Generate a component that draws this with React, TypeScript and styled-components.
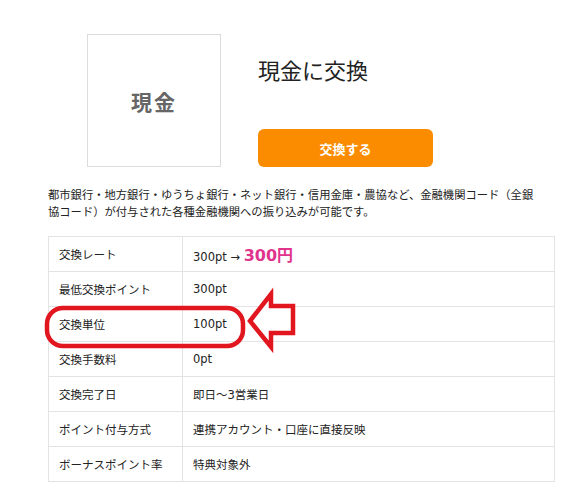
import React from 'react';
import styled, { createGlobalStyle } from 'styled-components';

const GlobalStyle = createGlobalStyle`
  body {
    margin: 0;
    background: #fff;
    color: #333;
    font-family: 'DejaVu Sans', 'Noto Sans CJK JP', sans-serif;
  }
`;

const Page = styled.div`
  position: relative;
  width: 507px;
  padding: 34px 25px 16px 48px;
`;

const Header = styled.div`
  display: flex;
  gap: 37px;
  padding-left: 39px;
`;

const LogoBox = styled.div`
  width: 132px;
  height: 131px;
  border: 1px solid #dcdcdc;
  display: flex;
  align-items: center;
  justify-content: center;
  font-family: 'Noto Sans CJK JP', sans-serif;
  font-size: 21px;
  font-weight: 700;
  letter-spacing: 2px;
  color: #666;
`;

const HeaderMain = styled.div`
  display: flex;
  flex-direction: column;
`;

const Title = styled.h1`
  margin: 22px 0 0;
  font-family: 'Noto Sans CJK JP', sans-serif;
  font-size: 22px;
  font-weight: 400;
  line-height: 26px;
  color: #222;
`;

const ExchangeButton = styled.button`
  margin-top: auto;
  width: 175px;
  height: 38px;
  border: none;
  border-radius: 6px;
  background: #fb8c00;
  color: #fff;
  font-family: 'Noto Sans CJK JP', sans-serif;
  font-size: 13px;
  font-weight: 700;
  cursor: pointer;
`;

const Description = styled.p`
  margin: 19px 0 16px;
  max-width: 492px;
  font-family: 'Noto Sans CJK JP', sans-serif;
  font-size: 11.3px;
  line-height: 17px;
  color: #222;
`;

const InfoTable = styled.table`
  width: 507px;
  border-collapse: collapse;
  font-size: 11.5px;
  color: #222;
`;

const Cell = styled.td<{ $label?: boolean }>`
  height: 34px;
  padding: 0 10px;
  border: 1px solid #e3e3e3;
  width: ${p => (p.$label ? '113px' : 'auto')};
  font-family: 'DejaVu Sans', 'Noto Sans CJK JP', sans-serif;
  font-size: 11.5px;
`;

const Yen = styled.span`
  font-family: 'DejaVu Sans', 'Noto Sans CJK JP', sans-serif;
  font-size: 16px;
  font-weight: 700;
  color: #e0338c;
`;

const Annotation = styled.svg`
  position: absolute;
  left: 0;
  top: 0;
  width: 580px;
  height: 500px;
  pointer-events: none;
`;

const rows: { label: string; value: React.ReactNode }[] = [
  { label: '交換レート', value: <>300pt → <Yen>300円</Yen></> },
  { label: '最低交換ポイント', value: '300pt' },
  { label: '交換単位', value: '100pt' },
  { label: '交換手数料', value: '0pt' },
  { label: '交換完了日', value: '即日～3営業日' },
  { label: 'ポイント付与方式', value: '連携アカウント・口座に直接反映' },
  { label: 'ボーナスポイント率', value: '特典対象外' },
];

const App: React.FC = () => (
  <Page>
    <GlobalStyle />
    <Header>
      <LogoBox>現金</LogoBox>
      <HeaderMain>
        <Title>現金に交換</Title>
        <ExchangeButton>交換する</ExchangeButton>
      </HeaderMain>
    </Header>
    <Description>
      都市銀行・地方銀行・ゆうちょ銀行・ネット銀行・信用金庫・農協など、金融機関コード（全銀協コード）が付与された各種金融機関への振り込みが可能です。
    </Description>
    <InfoTable>
      <tbody>
        {rows.map(r => (
          <tr key={r.label}>
            <Cell $label>{r.label}</Cell>
            <Cell>{r.value}</Cell>
          </tr>
        ))}
      </tbody>
    </InfoTable>
    <Annotation viewBox="0 0 580 500">
      <rect x="47" y="308" width="196" height="38" rx="16" fill="none" stroke="#e2161f" strokeWidth="4.5" />
      <polygon
        points="250,321 271,294 271,306 293,306 293,333 271,333 271,347"
        fill="#fff"
        stroke="#e2161f"
        strokeWidth="4.5"
      />
    </Annotation>
  </Page>
);

export default App;
